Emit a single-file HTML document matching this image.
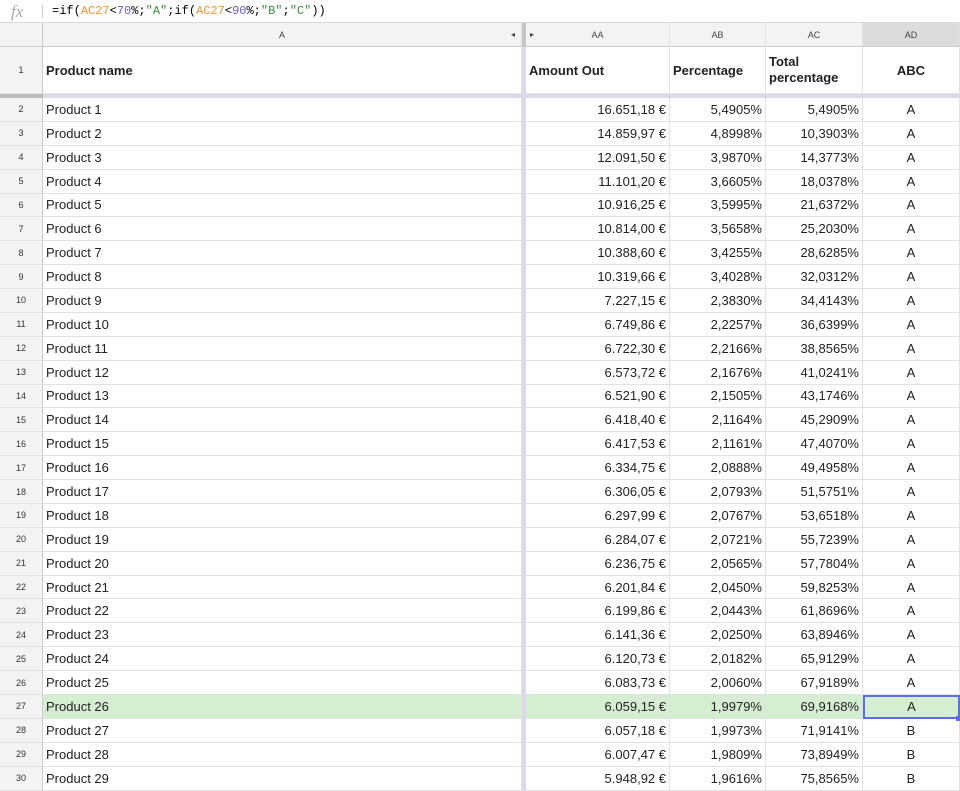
<!DOCTYPE html>
<html><head><meta charset="utf-8"><style>
*{box-sizing:border-box;margin:0;padding:0}
body{width:960px;height:791px;overflow:hidden;background:#fff;font-family:"Liberation Sans",Arial,sans-serif;font-size:13px;color:#222;position:relative}
.fb{position:absolute;left:0;top:0;width:960px;height:23px;border-bottom:1px solid #d9d9d9;background:#fff}
.fx{position:absolute;left:11px;top:2px;font-family:"Liberation Serif",serif;font-style:italic;font-size:17px;color:#aaa}
.sep{position:absolute;left:42px;top:5px;width:1px;height:13px;background:#ccc}
.f{position:absolute;left:52px;top:4px;font-family:"Liberation Mono",monospace;font-size:12px;color:#000}
.o{color:#f09433}.p{color:#6a5acd}.g{color:#3a8f3a}
.row{position:absolute;left:0;width:960px;display:flex}
.c{border-right:1px solid #e2e2e2;border-bottom:1px solid #e2e2e2;height:100%;display:flex;align-items:center;padding:0 3px 0 3px;white-space:nowrap;overflow:hidden}
.rh{width:43px;justify-content:center;font-size:9px;color:#333;background:#f3f3f3;border-right:1px solid #ccc}
.a{width:479px}
.fz{width:4px;background:#c6c6c6;border:none;padding:0}
.fzl{width:4px;background:#d9dae8;padding:0;height:100%}
.aa{width:144px;justify-content:flex-end}
.ab{width:96px;justify-content:flex-end}
.ac{width:97px;justify-content:flex-end}
.ad{width:97px;justify-content:center}
.hd .c{background:#f3f3f3;font-size:9px;color:#444;justify-content:center;border-bottom:1px solid #ccc}
.b .c{font-weight:bold;font-size:13px}
.sel .c{background:#d5eed1}
</style></head><body>
<div class="fb"><span class="fx">fx</span><div class="sep"></div>
<div class="f">=if(<span class="o">AC27</span>&lt;<span class="p">70</span>%;<span class="g">"A"</span>;if(<span class="o">AC27</span>&lt;<span class="p">90</span>%;<span class="g">"B"</span>;<span class="g">"C"</span>))</div></div>
<div class="row hd" style="top:23px;height:24px">
<div class="c rh"></div><div class="c a" style="position:relative">A<span style="position:absolute;right:6px;font-size:8px">◂</span></div><div class="fz"></div><div class="c aa" style="position:relative;justify-content:center"><span style="position:absolute;left:4px;font-size:8px">▸</span>AA</div><div class="c ab" style="justify-content:center">AB</div><div class="c ac" style="justify-content:center">AC</div><div class="c ad" style="background:#dcdcdc">AD</div></div>
<div class="row b" style="top:47px;height:47px">
<div class="c rh" style="font-weight:normal;font-size:9px">1</div><div class="c a">Product name</div><div class="fz" style="background:#d9dae8"></div><div class="c aa" style="justify-content:flex-start">Amount Out</div><div class="c ab" style="justify-content:flex-start">Percentage</div><div class="c ac" style="justify-content:flex-start;line-height:16px;white-space:normal">Total percentage</div><div class="c ad">ABC</div></div>
<div style="position:absolute;top:94px;left:0;width:43px;height:4px;background:#bdbdbd"></div>
<div style="position:absolute;top:94px;left:43px;width:917px;height:4px;background:#d9dae8"></div>
<div id="rows"></div>
<script>
var d=[["16.651,18","5,4905","5,4905"],["14.859,97","4,8998","10,3903"],["12.091,50","3,9870","14,3773"],["11.101,20","3,6605","18,0378"],["10.916,25","3,5995","21,6372"],["10.814,00","3,5658","25,2030"],["10.388,60","3,4255","28,6285"],["10.319,66","3,4028","32,0312"],["7.227,15","2,3830","34,4143"],["6.749,86","2,2257","36,6399"],["6.722,30","2,2166","38,8565"],["6.573,72","2,1676","41,0241"],["6.521,90","2,1505","43,1746"],["6.418,40","2,1164","45,2909"],["6.417,53","2,1161","47,4070"],["6.334,75","2,0888","49,4958"],["6.306,05","2,0793","51,5751"],["6.297,99","2,0767","53,6518"],["6.284,07","2,0721","55,7239"],["6.236,75","2,0565","57,7804"],["6.201,84","2,0450","59,8253"],["6.199,86","2,0443","61,8696"],["6.141,36","2,0250","63,8946"],["6.120,73","2,0182","65,9129"],["6.083,73","2,0060","67,9189"],["6.059,15","1,9979","69,9168"],["6.057,18","1,9973","71,9141"],["6.007,47","1,9809","73,8949"],["5.948,92","1,9616","75,8565"]];
var h="";for(var i=0;i<d.length;i++){var t=98+i*23.88;var s=i==25;
h+='<div class="row'+(s?' sel':'')+'" style="top:'+t+'px;height:23.88px"><div class="c rh" style="background:#f3f3f3">'+(i+2)+'</div><div class="c a">Product '+(i+1)+'</div><div class="fzl"></div><div class="c aa">'+d[i][0]+' €</div><div class="c ab">'+d[i][1]+'%</div><div class="c ac">'+d[i][2]+'%</div><div class="c ad"'+(s?' style="border:2px solid #5b6cf0"':'')+'>'+(i<26?'A':'B')+'</div></div>';}
document.getElementById("rows").innerHTML=h;
</script>
<div style="position:absolute;left:956px;top:716px;width:5px;height:5px;background:#5b6cf0"></div>
</body></html>
